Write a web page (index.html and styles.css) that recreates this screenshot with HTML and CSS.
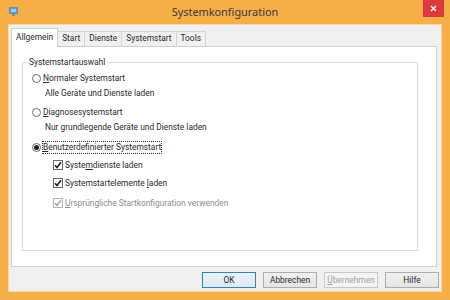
FILE: index.html
```html
<!DOCTYPE html>
<html>
<head>
<meta charset="utf-8">
<link rel="stylesheet" href="styles.css">
</head>
<body>
<div class="window">
  <div class="titlebar">
    <svg class="appicon" width="9" height="9" viewBox="0 0 9 9">
      <rect x="0.5" y="0.5" width="8" height="6" fill="#4aa3e0" stroke="#7a8a99"/>
      <rect x="2" y="2" width="5" height="3" fill="#8fd0f5"/>
      <rect x="3" y="7" width="3" height="2" fill="#7a8a99"/>
    </svg>
    <div class="title">Systemkonfiguration</div>
    <div class="close">
      <svg width="7" height="7" viewBox="0 0 7 7"><path d="M1 1L6 6M6 1L1 6" stroke="#fff" stroke-width="1.3"/></svg>
    </div>
  </div>
  <div class="client">
    <div class="tabs">
      <div class="tab active">Allgemein</div>
      <div class="tab">Start</div>
      <div class="tab">Dienste</div>
      <div class="tab">Systemstart</div>
      <div class="tab">Tools</div>
    </div>
    <div class="panel">
      <fieldset class="group">
        <legend>Systemstartauswahl</legend>
        <div class="opt r1"><span class="radio"></span><span><u>N</u>ormaler Systemstart</span></div>
        <div class="desc d1">Alle Geräte und Dienste laden</div>
        <div class="opt r2"><span class="radio"></span><span><u>D</u>iagnosesystemstart</span></div>
        <div class="desc d2">Nur grundlegende Geräte und Dienste laden</div>
        <div class="opt r3"><span class="radio on"></span><span class="focus"><u>B</u>enutzerdefinierter Systemstart</span></div>
        <div class="chk c1"><span class="box"><svg width="8" height="8" viewBox="0 0 8 8"><path d="M1 4.2L3 6.5L7 1.2" fill="none" stroke="#222" stroke-width="1.6"/></svg></span><span>Syste<u>m</u>dienste laden</span></div>
        <div class="chk c2"><span class="box"><svg width="8" height="8" viewBox="0 0 8 8"><path d="M1 4.2L3 6.5L7 1.2" fill="none" stroke="#222" stroke-width="1.6"/></svg></span><span>Systemstartelemente <u>l</u>aden</span></div>
        <div class="chk c3 disabled"><span class="box"><svg width="8" height="8" viewBox="0 0 8 8"><path d="M1 4.2L3 6.5L7 1.2" fill="none" stroke="#a8a8a8" stroke-width="1.6"/></svg></span><span><u>U</u>rsprüngliche Startkonfiguration verwenden</span></div>
      </fieldset>
    </div>
    <div class="buttons">
      <div class="btn default">OK</div>
      <div class="btn">Abbrechen</div>
      <div class="btn disabled"><u>Ü</u>bernehmen</div>
      <div class="btn">Hilfe</div>
    </div>
  </div>
</div>
</body>
</html>
```
FILE: styles.css
```css
* { box-sizing: border-box; }
html, body { margin: 0; padding: 0; }
body {
  width: 450px;
  height: 300px;
  overflow: hidden;
  font-family: Roboto, "Noto Sans", sans-serif;
  font-size: 8.4px;
  color: #2a2a2a;
}
.window {
  width: 450px;
  height: 300px;
  background: #f6ae48;
  display: flex;
  flex-direction: column;
}
.titlebar {
  height: 24px;
  display: flex;
  align-items: flex-start;
  position: relative;
}
.appicon {
  margin: 7px 0 0 9px;
}
.title {
  position: absolute;
  left: 0;
  right: 0;
  top: 4px;
  text-align: center;
  font-family: "Noto Sans", sans-serif;
  font-size: 10.9px;
  color: #3a3a3a;
}
.close {
  margin-left: auto;
  margin-right: 6px;
  width: 21px;
  height: 17px;
  background: #de3a3e;
  display: flex;
  align-items: center;
  justify-content: center;
}
.client {
  flex: 1;
  margin: 0 8px 8px 8px;
  background: #f0f0f0;
  border: 1px solid #fbd7a4;
  display: flex;
  flex-direction: column;
  padding: 3px 2px 3px 2px;
}
.tabs {
  display: flex;
  align-items: flex-end;
  height: 18px;
  position: relative;
  z-index: 1;
}
.tab {
  height: 15px;
  border: 1px solid #d4d4d4;
  border-bottom: none;
  background: #f0f0f0;
  padding: 0 4px;
  line-height: 13px;
  margin-left: -1px;
}
.tab:first-child { margin-left: 0; }
.tab.active {
  background: #fff;
  border-color: #d0d0d0;
  padding: 0 4px;
  line-height: 16px;
  margin-bottom: -1px;
  height: 19px;
}
.panel {
  height: 221px;
  margin-right: 2px;
  background: #fff;
  border: 1px solid #d0d0d0;
  padding: 10px 18px 10px 10px;
}
.group {
  margin: 0;
  height: 194px;
  border: 1px solid #dcdcdc;
  padding: 0;
  position: relative;
}
.group legend {
  margin-left: 4px;
  padding: 0 2px;
  line-height: 11px;
}
.opt, .desc, .chk {
  position: absolute;
  display: flex;
  align-items: center;
  white-space: nowrap;
  height: 12px;
}
.opt { left: 9px; }
.desc { left: 22px; }
.chk { left: 30px; }
.r1 { top: 4px; }
.d1 { top: 19px; }
.r2 { top: 38px; }
.d2 { top: 53px; }
.r3 { top: 73px; }
.c1 { top: 91px; }
.c2 { top: 109px; }
.c3 { top: 129px; }
.radio {
  width: 9px;
  height: 9px;
  border: 1px solid #6b6b6b;
  border-radius: 50%;
  background: #fff;
  margin-right: 2px;
  display: flex;
  align-items: center;
  justify-content: center;
}
.radio.on::after {
  content: "";
  width: 5px;
  height: 5px;
  border-radius: 50%;
  background: #222;
}
.focus {
  outline: 1px dotted #333;
  outline-offset: 0;
  line-height: 11px;
}
.box {
  width: 10px;
  height: 10px;
  border: 1px solid #6b6b6b;
  background: #fff;
  margin-right: 2px;
  display: flex;
  align-items: center;
  justify-content: center;
}
.chk.disabled { color: #8d8d8d; }
.chk.disabled .box { border-color: #b4b4b4; }
.buttons {
  display: flex;
  justify-content: flex-end;
  gap: 7px;
  margin-top: 5px;
  padding-right: 0;
}
.btn {
  width: 54px;
  height: 16px;
  border: 1px solid #adadad;
  background: linear-gradient(#f0f0f0, #e5e5e5);
  text-align: center;
  line-height: 14px;
}
.btn.default {
  border-color: #3c7fb1;
  background: linear-gradient(#eaf2f9, #dde9f4);
}
.btn.disabled {
  color: #a0a0a0;
  border-color: #c8c8c8;
  background: #f4f4f4;
}
```
